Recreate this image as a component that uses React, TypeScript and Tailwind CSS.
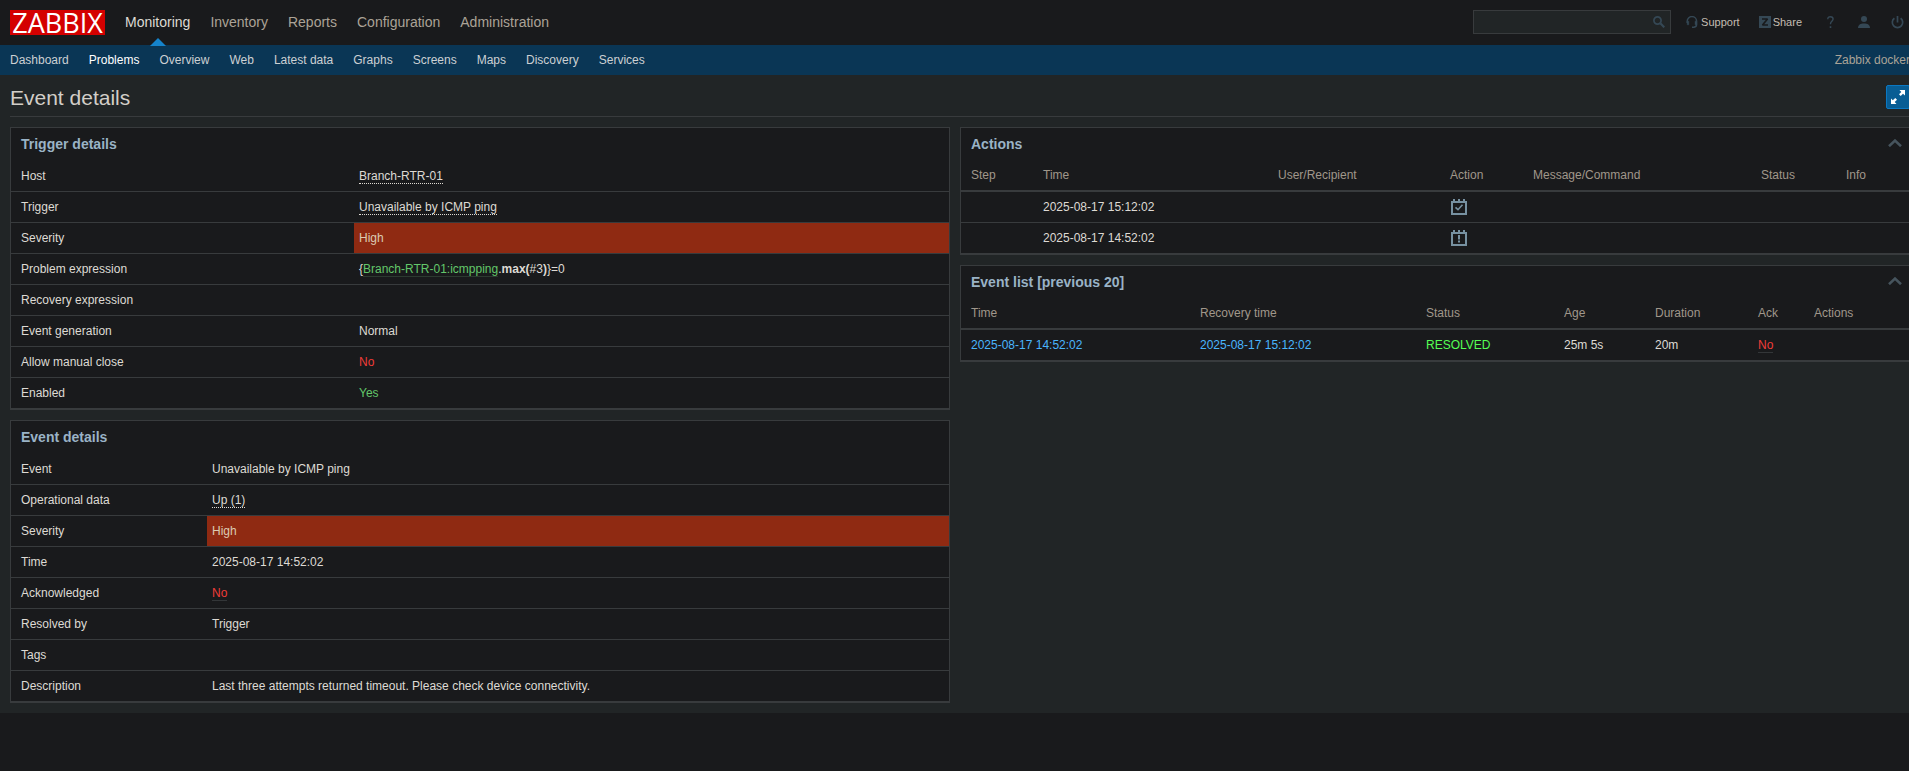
import React from "react";

const mainMenu = ["Monitoring", "Inventory", "Reports", "Configuration", "Administration"];
const subMenu = ["Dashboard", "Problems", "Overview", "Web", "Latest data", "Graphs", "Screens", "Maps", "Discovery", "Services"];

function Panel({ title, collapsible, children }: { title: string; collapsible?: boolean; children: React.ReactNode }) {
  return (
    <section className="border border-b-0 border-[#383b3d] bg-[#191a1c]">
      <div className="flex h-[33px] items-center justify-between pr-[7px] pb-[2px] pl-[10px]">
        <h2 className="text-[14px] leading-[18px] font-bold text-[#9ab3c6]">{title}</h2>
        {collapsible && (
          <button type="button" aria-label={`Collapse ${title}`} className="-mt-[2px] p-0">
            <svg width="14" height="8" viewBox="0 0 14 8" fill="none" stroke="#46545d" strokeWidth="2.6">
              <path d="M1 7.200 7 1.600l6 5.600" />
            </svg>
          </button>
        )}
      </div>
      {children}
    </section>
  );
}

type Row = { label: string; value?: React.ReactNode; high?: boolean };

function DetailTable({ rows, wide }: { rows: Row[]; wide?: boolean }) {
  return (
    <table className="w-full table-fixed border-separate border-spacing-0">
      <colgroup>
        <col className={wide ? "w-[343px]" : "w-[196px]"} />
        <col />
      </colgroup>
      <tbody>
        {rows.map((r, i) => {
          const line = i === rows.length - 1 ? "border-b-2" : "border-b";
          return (
            <tr key={r.label}>
              <th scope="row" className={`${line} border-[#383b3d] py-[7px] pr-[5px] pl-[10px] text-left font-normal`}>
                {r.label}
              </th>
              <td className={`${line} border-[#383b3d] px-[5px] py-[7px] ${r.high ? "bg-[#8f2a12] bg-clip-padding text-[#dccbb3]" : ""}`}>
                {r.value}
              </td>
            </tr>
          );
        })}
      </tbody>
    </table>
  );
}

function DataTable({ columns, rows }: { columns: { name: string; width: string }[]; rows: React.ReactNode[][] }) {
  return (
    <table className="w-full table-fixed border-separate border-spacing-0">
      <colgroup>
        {columns.map((c) => (
          <col key={c.name} className={c.width} />
        ))}
      </colgroup>
      <thead>
        <tr>
          {columns.map((c) => (
            <th
              key={c.name}
              scope="col"
              className="h-[31px] border-b-2 border-[#383b3d] px-[5px] pb-[2px] text-left font-normal text-[#a0978b] first:pl-[10px]"
            >
              {c.name}
            </th>
          ))}
        </tr>
      </thead>
      <tbody>
        {rows.map((cells, i) => (
          <tr key={i}>
            {cells.map((cell, j) => (
              <td
                key={j}
                className={`${i === rows.length - 1 ? "h-[32px] border-b-2" : "h-[31px] border-b"} border-[#383b3d] px-[5px] first:pl-[10px]`}
              >
                {cell}
              </td>
            ))}
          </tr>
        ))}
      </tbody>
    </table>
  );
}

function Dotted({ children }: { children: React.ReactNode }) {
  return (
    <a href="#" className="border-b border-dotted border-[#dedad4]">
      {children}
    </a>
  );
}

function Calendar({ label, children }: { label: string; children: React.ReactNode }) {
  return (
    <svg role="img" aria-label={label} width="18" height="16" viewBox="-1 0 18 16" fill="none" className="block">
      <path d="M1 3h14v12H1z" stroke="#7791a1" strokeWidth="2" />
      <path d="M2 0h2v2H2zM7 0h2v2H7zM12 0h2v2h-2z" fill="#7791a1" />
      {children}
    </svg>
  );
}

const triggerRows: Row[] = [
  { label: "Host", value: <Dotted>Branch-RTR-01</Dotted> },
  { label: "Trigger", value: <Dotted>Unavailable by ICMP ping</Dotted> },
  { label: "Severity", value: "High", high: true },
  {
    label: "Problem expression",
    value: (
      <>
        {"{"}
        <a href="#" className="border-b border-[#2c3a30] text-[#63c76a]">Branch-RTR-01:icmpping</a>.<b>max(</b>#3<b>)</b>
        {"}=0"}
      </>
    ),
  },
  { label: "Recovery expression" },
  { label: "Event generation", value: "Normal" },
  { label: "Allow manual close", value: <span className="text-[#f03c38]">No</span> },
  { label: "Enabled", value: <span className="text-[#63c76a]">Yes</span> },
];

const eventRows: Row[] = [
  { label: "Event", value: "Unavailable by ICMP ping" },
  { label: "Operational data", value: <Dotted>Up (1)</Dotted> },
  { label: "Severity", value: "High", high: true },
  { label: "Time", value: "2025-08-17 14:52:02" },
  { label: "Acknowledged", value: <a href="#" className="border-b border-[#333638] text-[#f03c38]">No</a> },
  { label: "Resolved by", value: "Trigger" },
  { label: "Tags" },
  { label: "Description", value: "Last three attempts returned timeout. Please check device connectivity." },
];

const actionColumns = [
  { name: "Step", width: "w-[77px]" },
  { name: "Time", width: "w-[235px]" },
  { name: "User/Recipient", width: "w-[172px]" },
  { name: "Action", width: "w-[83px]" },
  { name: "Message/Command", width: "w-[228px]" },
  { name: "Status", width: "w-[85px]" },
  { name: "Info", width: "w-auto" },
];

const eventColumns = [
  { name: "Time", width: "w-[234px]" },
  { name: "Recovery time", width: "w-[226px]" },
  { name: "Status", width: "w-[138px]" },
  { name: "Age", width: "w-[91px]" },
  { name: "Duration", width: "w-[103px]" },
  { name: "Ack", width: "w-[56px]" },
  { name: "Actions", width: "w-auto" },
];

export default function App() {
  return (
    <div className="min-h-screen overflow-hidden bg-[#191a1c] font-['Liberation_Sans',Arial,sans-serif] text-[12px] leading-[16px] text-[#dedad4]">
      <div className="-mr-px">
        <header className="flex h-[45px] items-center justify-between pl-[10px]">
          <div className="flex h-full items-center">
            <a
              href="#"
              className="mr-[10px] flex h-[25px] w-[95px] items-center justify-center bg-[#d40000] font-['Open_Sans',sans-serif] text-[27px] leading-[25px] font-medium text-white"
            >
              ZABBIX
            </a>
            <nav aria-label="Main" className="-mt-px flex h-full">
              {mainMenu.map((m, i) => (
                <a
                  key={m}
                  href="#"
                  className={`relative flex items-center px-[10px] text-[14px] ${i === 0 ? "text-[#dedad4]" : "text-[#aba397]"}`}
                >
                  {m}
                  {i === 0 && (
                    <svg className="absolute -bottom-px left-1/2 -ml-[8px]" width="16" height="8" viewBox="0 0 16 8">
                      <path d="M0 8 8 0l8 8z" fill="#1583cb" />
                    </svg>
                  )}
                </a>
              ))}
            </nav>
          </div>
          <div className="-mt-px flex items-center text-[11px]">
            <form role="search" className="relative mr-[15px]">
              <input
                type="search"
                aria-label="Search"
                className="block h-[24px] w-[198px] border border-[#383b3d] bg-[#212526] px-[5px] outline-none"
              />
              <button type="submit" aria-label="Submit search" className="absolute top-[6px] right-[6px]">
                <svg width="12" height="12" viewBox="0 0 12 12" fill="none" stroke="#354855">
                  <circle cx="4.500" cy="4.500" r="3.600" strokeWidth="1.700" />
                  <path d="m7.300 7.300 4 4" strokeWidth="2.200" />
                </svg>
              </button>
            </form>
            <a href="#" className="mr-[19px] flex items-center gap-[3px] text-[#c4bdb2]">
              <svg width="12" height="12" viewBox="0 0 12 12" fill="none" stroke="#354855" strokeWidth="1.500">
                <path d="M1.200 7V5.300a4.700 4.700 0 0 1 9.400 0V8.500c0 1.600-1 2.500-2.600 2.700H6" />
                <path d="M1.200 5.200h1.600v3.600H1.200zM9 5.200h1.600v3.600H9z" fill="#354855" strokeWidth=".4" />
              </svg>
              Support
            </a>
            <a href="#" className="mr-[25px] flex items-center gap-[2px] text-[#c4bdb2]">
              <svg width="12" height="12" viewBox="0 0 12 12">
                <path d="M0 0h12v12H0z" fill="#354855" />
                <path d="M3 3h5.500L3.500 9H9" fill="none" stroke="#191a1c" strokeWidth="1.700" strokeLinejoin="bevel" />
              </svg>
              Share
            </a>
            <a href="#" aria-label="Help" className="mr-[24px]">
              <svg width="7" height="12" viewBox="0 0 7 12" fill="none" stroke="#354855" strokeWidth="1.400">
                <path d="M.8 3.200C.8 1.600 1.800.7 3.400.7s2.700 1 2.700 2.300c0 2-2.600 2.400-2.600 4.700v.6" />
                <path d="M3.500 10.200V12" strokeWidth="1.600" />
              </svg>
            </a>
            <a href="#" aria-label="User profile" className="mr-[21px]">
              <svg width="12" height="12" viewBox="0 0 12 12" fill="#354855">
                <circle cx="6" cy="3" r="3" />
                <path d="M0 12c0-3.200 2.500-4.600 6-4.600s6 1.400 6 4.600z" />
              </svg>
            </a>
            <a href="#" aria-label="Sign out" className="mr-[6px]">
              <svg width="13" height="13" viewBox="0 0 13 13" fill="none" stroke="#354855" strokeWidth="1.700">
                <path d="M3.400 2.200a5.200 5.200 0 1 0 6.200 0M6.500 0v6.500" />
              </svg>
            </a>
          </div>
        </header>

        <div className="flex h-[30px] items-center justify-between bg-[#0a3655] pl-[10px]">
          <nav aria-label="Monitoring" className="flex gap-[20px]">
            {subMenu.map((m) => (
              <a key={m} href="#" className={m === "Problems" ? "text-white" : "text-[#ccd0d3]"}>
                {m}
              </a>
            ))}
          </nav>
          <span className="text-[#aba397]">Zabbix docker</span>
        </div>

        <main className="bg-[#212526] pb-[10px] pl-[10px]">
          <div className="flex h-[42px] items-center justify-between border-b border-[#383b3d] pt-[2px]">
            <h1 className="pt-[2px] text-[21px] leading-[24px] text-[#d2cec8]">Event details</h1>
            <button
              type="button"
              aria-label="Kiosk mode"
              className="flex size-[24px] items-center justify-center rounded-[2px] border border-[#0a78c2] bg-[#085d94]"
            >
              <svg width="14" height="14" viewBox="0 0 14 14" fill="#fff">
                <path d="M8.500 0H14v5.500l-2-1.800-2.300 2.300-1.700-1.700L10.300 2zM5.500 14H0V8.500l1.800 1.800L4.300 8 6 9.700 3.700 12z" />
              </svg>
            </button>
          </div>

          <div className="grid grid-cols-2 pt-[10px]">
            <div className="flex flex-col gap-[10px] pr-[10px]">
              <Panel title="Trigger details">
                <DetailTable rows={triggerRows} wide />
              </Panel>
              <Panel title="Event details">
                <DetailTable rows={eventRows} />
              </Panel>
            </div>
            <div className="flex flex-col gap-[10px]">
              <Panel title="Actions" collapsible>
                <DataTable
                  columns={actionColumns}
                  rows={[
                    [
                      "",
                      "2025-08-17 15:12:02",
                      "",
                      <Calendar label="Problem resolved">
                        <path d="m4.500 8.300 2.500 2.400 4.500-5" stroke="#7791a1" strokeWidth="1.600" />
                      </Calendar>,
                      "",
                      "",
                      "",
                    ],
                    [
                      "",
                      "2025-08-17 14:52:02",
                      "",
                      <Calendar label="Problem created">
                        <path d="M7 5h2v4.500H7zM7 10.500h2v2H7z" fill="#7791a1" />
                      </Calendar>,
                      "",
                      "",
                      "",
                    ],
                  ]}
                />
              </Panel>
              <Panel title="Event list [previous 20]" collapsible>
                <DataTable
                  columns={eventColumns}
                  rows={[
                    [
                      <a href="#" className="text-[#4ab5fd]">2025-08-17 14:52:02</a>,
                      <a href="#" className="text-[#4ab5fd]">2025-08-17 15:12:02</a>,
                      <span className="text-[#55ff55]">RESOLVED</span>,
                      "25m 5s",
                      "20m",
                      <a href="#" className="border-b border-[#333638] text-[#f03c38]">No</a>,
                      "",
                    ],
                  ]}
                />
              </Panel>
            </div>
          </div>
        </main>
      </div>
    </div>
  );
}
